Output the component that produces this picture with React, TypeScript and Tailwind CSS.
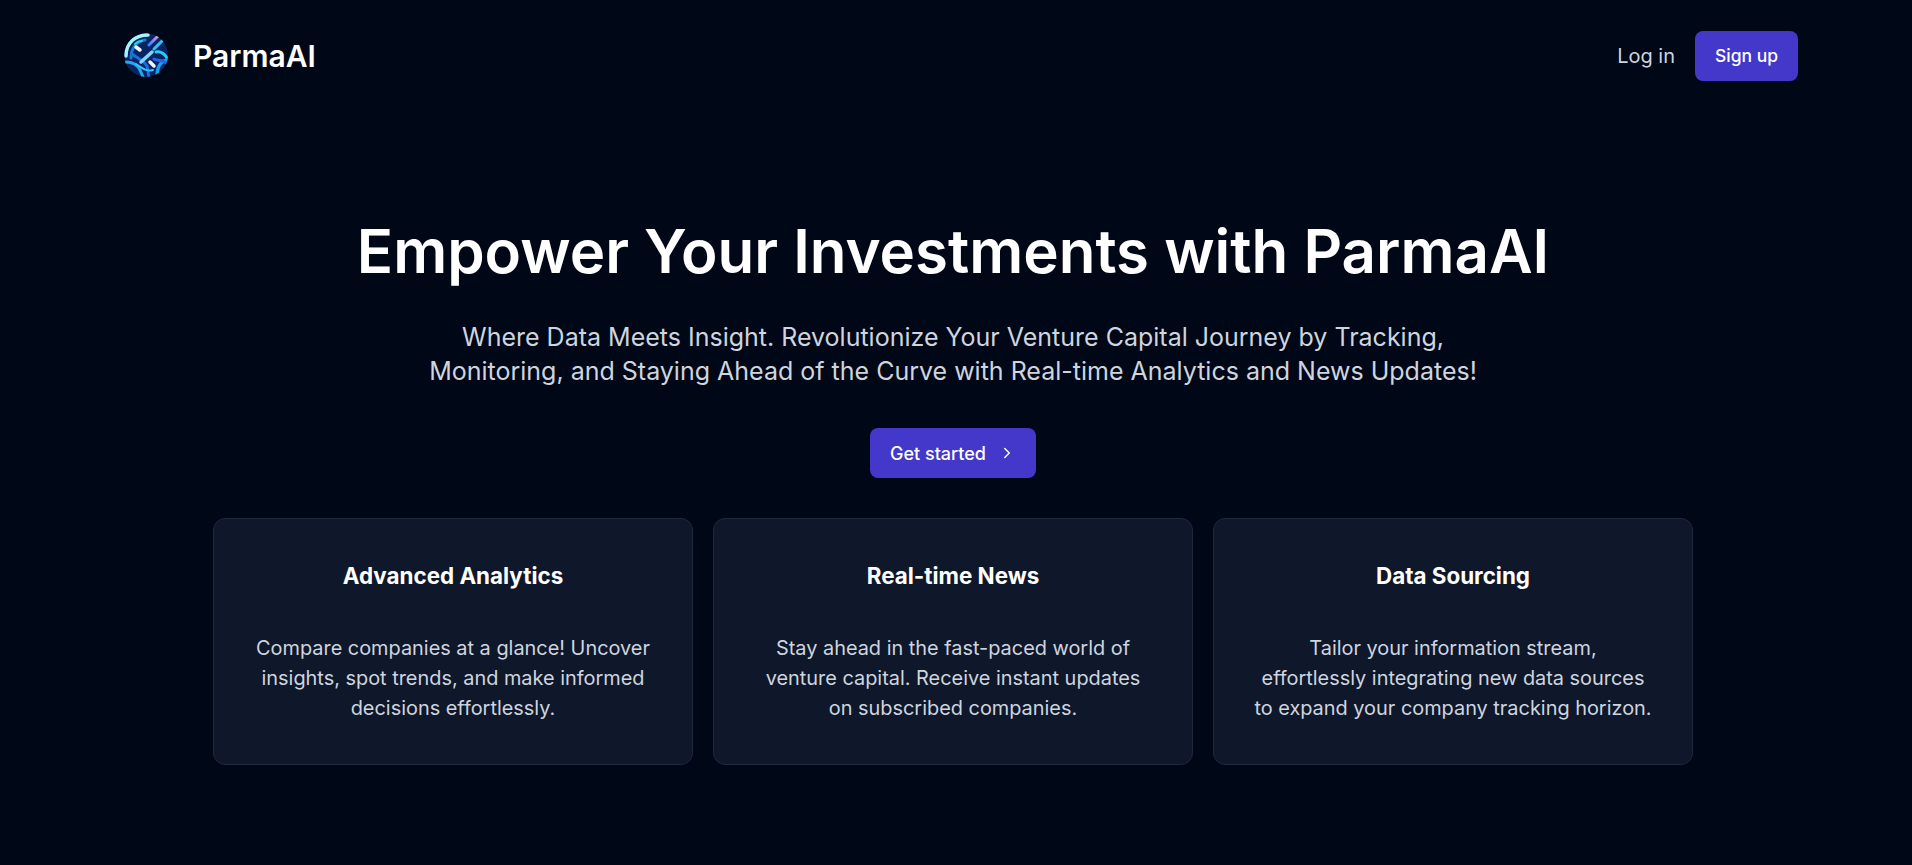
import { ChevronRight } from "lucide-react";

const features = [
  {
    title: "Advanced Analytics",
    lines: ["Compare companies at a glance! Uncover", "insights, spot trends, and make informed", "decisions effortlessly."],
  },
  {
    title: "Real-time News",
    lines: ["Stay ahead in the fast-paced world of", "venture capital. Receive instant updates", "on subscribed companies."],
  },
  {
    title: "Data Sourcing",
    lines: ["Tailor your information stream,", "effortlessly integrating new data sources", "to expand your company tracking horizon."],
  },
];

const Logo = () => (
  <svg width="46" height="46" viewBox="0 0 46 46" fill="none" className="shrink-0">
    <defs>
      <clipPath id="logo-clip">
        <circle cx="23" cy="22" r="22" />
      </clipPath>
      <linearGradient id="logo-stripe" x1="27" y1="12" x2="37" y2="2" gradientUnits="userSpaceOnUse">
        <stop offset="0" stopColor="#3b82f6" />
        <stop offset="0.6" stopColor="#a78bfa" />
        <stop offset="1" stopColor="#fdba74" />
      </linearGradient>
    </defs>
    <g clipPath="url(#logo-clip)" strokeLinecap="round">
      <circle cx="23" cy="22" r="22" fill="#0a2463" />
      <path d="M3 23C3 9 13 2 25 2" stroke="#a5f3fc" strokeWidth="3.5" />
      <path d="M8 25C8 15 14 8 22 7" stroke="#0e7fd6" strokeWidth="3" />
      <path d="M12 11C14 9 16 8 19 8" stroke="#22d3ee" strokeWidth="2" />
      <path d="M26 12L36 2" stroke="url(#logo-stripe)" strokeWidth="3" />
      <path d="M31 16L40 7" stroke="#38bdf8" strokeWidth="3" />
      <path d="M33 19C37 18 41 20 44 25" stroke="#22d3ee" strokeWidth="3" />
      <path d="M3 29C10 29 14 31 17 37L20 44" stroke="#22a7f0" strokeWidth="3" />
      <path d="M9 21C14 25 20 27 24 33L26 44" stroke="#1d6fe0" strokeWidth="3" />
      <path d="M34 44C34 35 36 29 44 27" stroke="#0ea5e9" strokeWidth="3.5" />
      <path d="M31 26C36 29 40 25 45 32" stroke="#2563eb" strokeWidth="3" />
      <path d="M13 31C19 35 24 39 30 37" stroke="#38bdf8" strokeWidth="2" />
      <path d="M18 29L29 19" stroke="#7dd3fc" strokeWidth="3.5" />
      <path d="M13 14L17 17" stroke="#f8fafc" strokeWidth="3.5" />
      <path d="M27 29L31 33" stroke="#f1f5f9" strokeWidth="3.5" />
    </g>
  </svg>
);

const App = () => {
  return (
    <div className="min-h-[865px] w-full bg-[#000717] font-['Inter',sans-serif]">
      <div className="w-[1906px] pb-[100px]">
        <header className="flex h-[112px] items-center justify-between pl-[123px] pr-[108px]">
          <div className="flex items-center gap-[24px]">
            <Logo />
            <span className="text-[30px] font-semibold text-white">ParmaAI</span>
          </div>
          <div className="flex items-center gap-5">
            <a className="text-[20px] text-[#ced5df]">Log in</a>
            <button className="h-[50px] w-[103px] rounded-lg bg-[#4338ca] text-[17.5px] font-medium text-white">
              Sign up
            </button>
          </div>
        </header>

        <main className="flex flex-col items-center">
          <h1 className="mt-[103px] text-[60px] leading-[72px] font-semibold text-white">
            Empower Your Investments with ParmaAI
          </h1>
          <p className="mt-[33px] text-center text-[25px] leading-[34px] text-[#ced5df]">
            Where Data Meets Insight. Revolutionize Your Venture Capital Journey by Tracking,
            <br />
            Monitoring, and Staying Ahead of the Curve with Real-time Analytics and News Updates!
          </p>
          <button className="mt-[40px] flex h-[50px] w-[166px] items-center justify-center gap-3 rounded-lg bg-[#4338ca] text-[18px] font-medium text-white">
            Get started
            <ChevronRight size={18} />
          </button>

          <div className="mt-10 grid w-[1480px] grid-cols-3 gap-5">
            {features.map((feature) => (
              <div
                key={feature.title}
                className="flex h-[247px] flex-col items-center rounded-xl border border-slate-800 bg-slate-900 pt-[41px] text-center"
              >
                <h2 className="text-[22.4px] leading-[32px] font-bold text-white">{feature.title}</h2>
                <p className="mt-[41px] text-[19.9px] leading-[30px] text-[#ced5df]">
                  {feature.lines.map((line) => (
                    <span key={line} className="block">
                      {line}
                    </span>
                  ))}
                </p>
              </div>
            ))}
          </div>
        </main>
      </div>
    </div>
  );
};

export default App;
